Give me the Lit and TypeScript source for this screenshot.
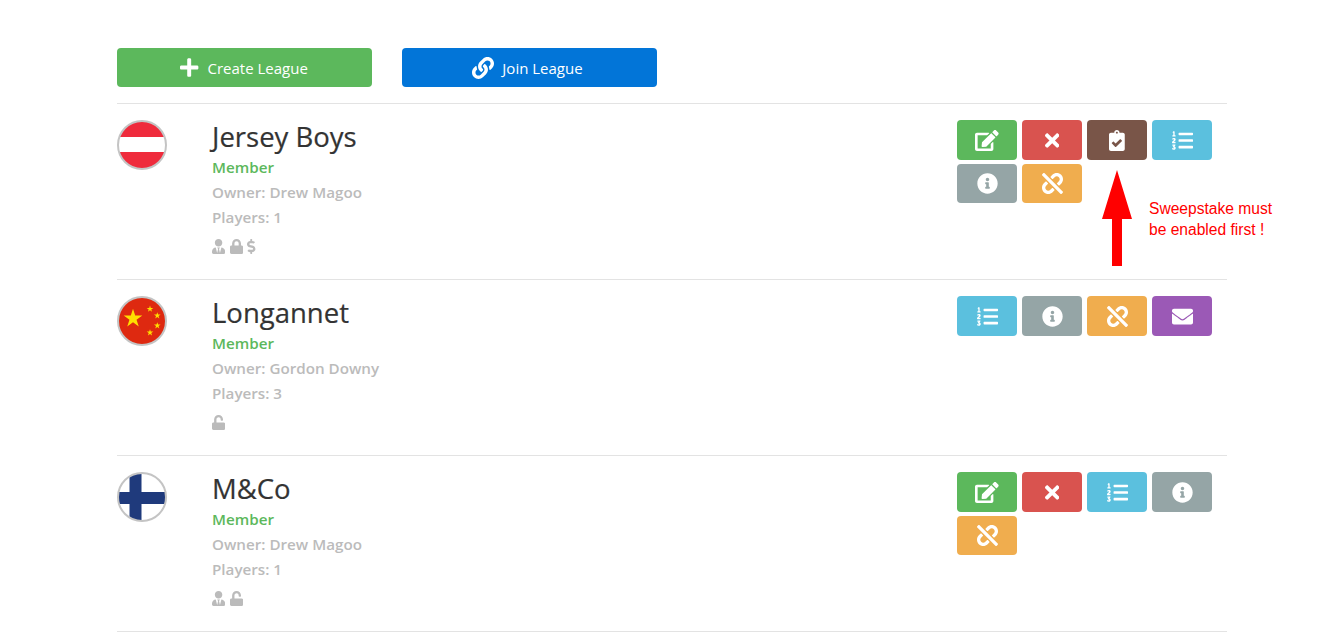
import { LitElement, html, css, svg } from "lit";
import { customElement } from "lit/decorators.js";

const I: Record<string, [number, string]> = {
  plus: [448, "M416 208H272V64c0-17.67-14.33-32-32-32h-32c-17.67 0-32 14.33-32 32v144H32c-17.67 0-32 14.33-32 32v32c0 17.67 14.33 32 32 32h144v144c0 17.67 14.33 32 32 32h32c17.67 0 32-14.33 32-32V304h144c17.67 0 32-14.33 32-32v-32c0-17.67-14.33-32-32-32z"],
  link: [512, "M326.612 185.391c59.747 59.809 58.927 155.698.36 214.59-.11.12-.24.25-.36.37l-67.2 67.2c-59.27 59.27-155.699 59.262-214.96 0-59.27-59.26-59.27-155.7 0-214.96l37.106-37.106c9.84-9.84 26.786-3.3 27.294 10.606.648 17.722 3.826 35.527 9.69 52.721 1.986 5.822.567 12.262-3.783 16.612l-13.087 13.087c-28.026 28.026-28.905 73.66-1.155 101.96 28.024 28.579 74.086 28.749 102.325.51l67.2-67.19c28.191-28.191 28.073-73.757 0-101.83-3.701-3.694-7.429-6.564-10.341-8.569a16.037 16.037 0 0 1-6.947-12.606c-.396-10.567 3.348-21.456 11.698-29.806l21.054-21.055c5.521-5.521 14.182-6.199 20.584-1.731a152.482 152.482 0 0 1 20.522 17.197zM467.547 44.449c-59.261-59.262-155.69-59.27-214.96 0l-67.2 67.2c-.12.12-.25.25-.36.37-58.566 58.892-59.387 154.781.36 214.59a152.454 152.454 0 0 0 20.521 17.196c6.402 4.468 15.064 3.789 20.584-1.731l21.054-21.055c8.35-8.35 12.094-19.239 11.698-29.806a16.037 16.037 0 0 0-6.947-12.606c-2.912-2.005-6.64-4.875-10.341-8.569-28.073-28.073-28.191-73.639 0-101.83l67.2-67.19c28.239-28.239 74.3-28.069 102.325.51 27.75 28.3 26.872 73.934-1.155 101.96l-13.087 13.087c-4.35 4.35-5.769 10.79-3.783 16.612 5.864 17.194 9.042 34.999 9.69 52.721.509 13.906 17.454 20.446 27.294 10.606l37.106-37.106c59.271-59.259 59.271-155.699.001-214.959z"],
  times: [352, "M242.72 256l100.07-100.07c12.28-12.28 12.28-32.19 0-44.48l-22.24-22.24c-12.28-12.28-32.19-12.28-44.48 0L176 189.28 75.93 89.21c-12.28-12.28-32.19-12.28-44.48 0L9.21 111.45c-12.28 12.28-12.28 32.19 0 44.48L109.28 256 9.21 356.07c-12.28 12.28-12.28 32.19 0 44.48l22.24 22.24c12.28 12.28 32.2 12.28 44.48 0L176 322.72l100.07 100.07c12.28 12.28 32.2 12.28 44.48 0l22.24-22.24c12.28-12.28 12.28-32.19 0-44.48L242.72 256z"],
  info: [512, "M256 8C119.043 8 8 119.083 8 256c0 136.997 111.043 248 248 248s248-111.003 248-248C504 119.083 392.957 8 256 8zm0 110c23.196 0 42 18.804 42 42s-18.804 42-42 42-42-18.804-42-42 18.804-42 42-42zm56 254c0 6.627-5.373 12-12 12h-88c-6.627 0-12-5.373-12-12v-24c0-6.627 5.373-12 12-12h12v-64h-12c-6.627 0-12-5.373-12-12v-24c0-6.627 5.373-12 12-12h64c6.627 0 12 5.373 12 12v100h12c6.627 0 12 5.373 12 12v24z"],
  envelope: [512, "M502.3 190.8c3.9-3.1 9.7-.2 9.7 4.7V400c0 26.5-21.5 48-48 48H48c-26.5 0-48-21.5-48-48V195.6c0-5 5.7-7.8 9.7-4.7 22.4 17.4 52.1 39.5 154.1 113.6 21.1 15.4 56.7 47.8 92.2 47.6 35.7.3 72-32.8 92.3-47.6 102-74.1 131.6-96.3 154-113.7zM256 320c23.2.4 56.6-29.2 73.4-41.4 132.7-96.3 142.8-104.7 173.4-128.7 5.8-4.5 9.2-11.5 9.2-18.9v-19c0-26.5-21.5-48-48-48H48C21.5 64 0 85.5 0 112v19c0 7.4 3.4 14.3 9.2 18.9 30.6 23.9 40.7 32.4 173.4 128.7 16.8 12.2 50.2 41.8 73.4 41.4z"],
  check: [384, "M336 64h-80c0-35.3-28.7-64-64-64s-64 28.7-64 64H48C21.5 64 0 85.5 0 112v352c0 26.5 21.5 48 48 48h288c26.5 0 48-21.5 48-48V112c0-26.5-21.5-48-48-48zM192 40c13.3 0 24 10.7 24 24s-10.7 24-24 24-24-10.7-24-24 10.7-24 24-24zm121.2 231.8l-143 141.8c-4.7 4.7-12.3 4.6-17-.1l-82.6-83.3c-4.7-4.7-4.6-12.3.1-17L99.1 285c4.7-4.7 12.3-4.6 17 .1l46 46.4 106-105.2c4.7-4.7 12.3-4.6 17 .1l28.2 28.4c4.7 4.8 4.6 12.3-.1 17z"],
  list: [512, "M61.77 401l17.5-20.15a19.92 19.92 0 0 0 5.07-14.19v-3.31C84.34 356 80.5 352 73 352H16a8 8 0 0 0-8 8v16a8 8 0 0 0 8 8h22.83a157.41 157.41 0 0 0-11 12.31l-5.61 7c-4 5.07-5.25 10.13-2.8 14.88l1.05 1.93c3 5.76 6.29 7.88 12.25 7.88h4.73c10.33 0 15.94 2.44 15.94 9.09 0 4.72-4.2 8.22-14.36 8.22a41.54 41.54 0 0 1-15.47-3.12c-6.49-3.88-11.74-3.5-15.6 3.12l-5.59 9.31c-3.72 6.13-3.19 11.72 2.63 15.94 7.71 4.69 20.38 9.44 37 9.44 34.16 0 48.5-22.75 48.5-44.12-.03-14.38-9.12-29.76-28.73-34.88zM496 224H176a16 16 0 0 0-16 16v32a16 16 0 0 0 16 16h320a16 16 0 0 0 16-16v-32a16 16 0 0 0-16-16zm0-160H176a16 16 0 0 0-16 16v32a16 16 0 0 0 16 16h320a16 16 0 0 0 16-16V80a16 16 0 0 0-16-16zm0 320H176a16 16 0 0 0-16 16v32a16 16 0 0 0 16 16h320a16 16 0 0 0 16-16v-32a16 16 0 0 0-16-16zM16 160h64a8 8 0 0 0 8-8v-16a8 8 0 0 0-8-8H64V40a8 8 0 0 0-8-8H32a8 8 0 0 0-7.14 4.42l-8 16A8 8 0 0 0 24 64h8v64H16a8 8 0 0 0-8 8v16a8 8 0 0 0 8 8zm-3.91 160H80a8 8 0 0 0 8-8v-16a8 8 0 0 0-8-8H41.32c3.29-10.29 48.34-18.68 48.34-56.44 0-29.06-25-39.56-44.47-39.56-21.36 0-33.8 10-40.46 18.75-4.37 5.59-3 10.84 2.8 15.37l8.58 6.88c5.61 4.56 11 2.47 16.12-2.44a13.44 13.44 0 0 1 9.46-3.84c3.33 0 9.28 1.56 9.28 8.75C51 248.19 0 257.31 0 304.59v4C0 316 5.08 320 12.09 320z"],
  lock: [448, "M400 224h-24v-72C376 68.2 307.8 0 224 0S72 68.2 72 152v72H48c-26.5 0-48 21.5-48 48v192c0 26.5 21.5 48 48 48h352c26.5 0 48-21.5 48-48V272c0-26.5-21.5-48-48-48zm-104 0H152v-72c0-39.7 32.3-72 72-72s72 32.3 72 72v72z"],
  unlock: [448, "M400 256H152V152.9c0-39.6 31.7-72.5 71.3-72.9 40-.4 72.7 32.1 72.7 72v16c0 13.3 10.7 24 24 24h32c13.3 0 24-10.7 24-24v-16C376 68 307.5-.3 223.5 0 139.5.3 72 69.5 72 153.5V256H48c-26.5 0-48 21.5-48 48v160c0 26.5 21.5 48 48 48h352c26.5 0 48-21.5 48-48V304c0-26.5-21.5-48-48-48z"],
  edit: [576, "M402.6 83.2l90.2 90.2c3.8 3.8 3.8 10 0 13.8L274.4 405.6l-92.8 10.3c-12.4 1.4-22.9-9.1-21.5-21.5l10.3-92.8L388.8 83.2c3.8-3.8 10-3.8 13.8 0zm162-22.9l-48.8-48.8c-15.2-15.2-39.9-15.2-55.2 0l-35.4 35.4c-3.8 3.8-3.8 10 0 13.8l90.2 90.2c3.8 3.8 10 3.8 13.8 0l35.4-35.4c15.2-15.3 15.2-40 0-55.2zM384 346.2V448H64V128h229.8c3.2 0 6.2-1.3 8.5-3.5l40-40c7.6-7.6 2.2-20.5-8.5-20.5H48C21.5 64 0 85.5 0 112v352c0 26.5 21.5 48 48 48h352c26.5 0 48-21.5 48-48V306.2c0-10.7-12.9-16-20.5-8.5l-40 40c-2.2 2.3-3.5 5.3-3.5 8.5z"],
  unlink: [512, "M304.083 405.907c4.686 4.686 4.686 12.284 0 16.97l-44.674 44.674c-59.263 59.262-155.693 59.266-214.961 0-59.264-59.265-59.264-155.696 0-214.96l44.675-44.675c4.686-4.686 12.284-4.686 16.971 0l39.598 39.598c4.686 4.686 4.686 12.284 0 16.971l-44.675 44.674c-28.072 28.073-28.072 73.75 0 101.823 28.072 28.072 73.75 28.073 101.824 0l44.674-44.674c4.686-4.686 12.284-4.686 16.971 0l39.597 39.599zm-56.568-260.216c4.686 4.686 12.284 4.686 16.971 0l44.674-44.674c28.072-28.075 73.75-28.073 101.824 0 28.072 28.073 28.072 73.75 0 101.823l-44.675 44.674c-4.686 4.686-4.686 12.284 0 16.971l39.598 39.598c4.686 4.686 12.284 4.686 16.971 0l44.675-44.675c59.265-59.265 59.265-155.695 0-214.96-59.266-59.264-155.695-59.264-214.961 0l-44.674 44.674c-4.686 4.686-4.686 12.284 0 16.971l39.597 39.598zm234.828 359.28l22.627-22.627c9.373-9.373 9.373-24.569 0-33.941L63.598 7.029c-9.373-9.373-24.569-9.373-33.941 0L7.029 29.657c-9.373 9.373-9.373 24.569 0 33.941l441.373 441.373c9.373 9.372 24.569 9.372 33.941 0z"],
  user: [448, "M224 256c70.7 0 128-57.3 128-128S294.7 0 224 0 96 57.3 96 128s57.3 128 128 128zm95.8 32.6L272 480l-32-136 32-56h-96l32 56-32 136-47.8-191.4C56.9 292 0 350.3 0 422.4V464c0 26.5 21.5 48 48 48h352c26.5 0 48-21.5 48-48v-41.6c0-72.1-56.9-130.4-128.2-133.8z"],
  dollar: [288, "M209.2 233.4l-108-31.6C88.7 198.2 80 186.5 80 173.5c0-16.3 13.2-29.5 29.5-29.5h66.3c12.2 0 24.2 3.7 34.2 10.5 6.1 4.1 14.3 3.1 19.5-2l34.8-34c7.1-6.9 6.1-18.4-1.8-24.5C238 74.8 207.4 64.1 176 64V16c0-8.8-7.2-16-16-16h-32c-8.8 0-16 7.2-16 16v48h-2.5C45.8 64-5.4 118.7.5 183.6c4.2 46.1 39.4 83.6 83.8 96.6l102.5 30c12.5 3.7 21.2 15.3 21.2 28.3 0 16.3-13.2 29.5-29.5 29.5h-66.3C100 368 88 364.3 78 357.5c-6.1-4.1-14.3-3.1-19.5 2l-34.8 34c-7.1 6.9-6.1 18.4 1.8 24.5 24.5 19.2 55.1 29.9 86.5 30v48c0 8.8 7.2 16 16 16h32c8.8 0 16-7.2 16-16v-48.2c46.6-.9 90.3-28.6 105.7-72.7 21.5-61.6-14.6-124.8-72.5-141.7z"],
};

const icon = (n: string, size: number) => {
  const [w, d] = I[n];
  return html`<svg class="ic" width=${(w / 512) * size} height=${size} viewBox="0 0 ${w} 512" fill="currentColor"><path d=${d}></path></svg>`;
};

const star = (cx: number, cy: number, r: number) => {
  const pts: string[] = [];
  for (let i = 0; i < 10; i++) {
    const a = -Math.PI / 2 + (i * Math.PI) / 5;
    const q = i % 2 ? r * 0.382 : r;
    pts.push(`${(cx + q * Math.cos(a)).toFixed(2)},${(cy + q * Math.sin(a)).toFixed(2)}`);
  }
  return svg`<polygon points=${pts.join(" ")} fill="#ffde00"></polygon>`;
};

const flags: Record<string, unknown> = {
  at: svg`<rect width="50" height="50" fill="#ef2b3c"></rect><rect y="17" width="50" height="15" fill="#fff"></rect>`,
  cn: svg`<rect width="50" height="50" fill="#de2910"></rect>${star(16, 22.5, 9.8)}${star(33, 13, 3.5)}${star(40.3, 19.7, 3.5)}${star(40.3, 29.7, 3.5)}${star(33, 36.7, 3.5)}`,
  fi: svg`<rect width="50" height="50" fill="#fff"></rect><rect x="12.5" width="12" height="50" fill="#1f3a7c"></rect><rect y="20" width="50" height="12" fill="#1f3a7c"></rect>`,
};

type Btn = { i: string; c: string };
const B: Record<string, Btn> = {
  edit: { i: "edit", c: "green" },
  del: { i: "times", c: "red" },
  check: { i: "check", c: "brown" },
  list: { i: "list", c: "cyan" },
  info: { i: "info", c: "grey" },
  unlink: { i: "unlink", c: "orange" },
  mail: { i: "envelope", c: "purple" },
};

const leagues = [
  { flag: "at", name: "Jersey Boys", owner: "Drew Magoo", players: 1, meta: ["user", "lock", "dollar"], btns: ["edit", "del", "check", "list", "info", "unlink"], note: true },
  { flag: "cn", name: "Longannet", owner: "Gordon Downy", players: 3, meta: ["unlock"], btns: ["list", "info", "unlink", "mail"], note: false },
  { flag: "fi", name: "M&Co", owner: "Drew Magoo", players: 1, meta: ["user", "unlock"], btns: ["edit", "del", "list", "info", "unlink"], note: false },
];

@customElement("app-root")
export class AppRoot extends LitElement {
  static styles = css`
    :host {
      display: block;
      font-family: "Open Sans", "Noto Sans", sans-serif;
    }
    .page {
      width: 1110px;
      margin: 0 auto;
      padding-top: 48px;
    }
    .top {
      display: flex;
      gap: 30px;
      padding-bottom: 16px;
      border-bottom: 1px solid #e3e3e3;
    }
    .cta {
      box-sizing: border-box;
      width: 255px;
      height: 39px;
      border-radius: 4px;
      color: #fff;
      display: flex;
      align-items: center;
      justify-content: center;
      gap: 9px;
      font-size: 15px;
    }
    .cta.create { background: #5cb85c; }
    .cta.join { background: #0275d8; padding-right: 3px; gap: 8px; }
    .ic { display: block; flex: none; }
    .row {
      position: relative;
      display: flex;
      height: 159px;
      padding-top: 16px;
      border-bottom: 1px solid #e3e3e3;
    }
    .flag {
      width: 50px;
      height: 50px;
      flex: none;
      display: block;
      margin-right: 45.5px;
    }
    .info { flex: 1; }
    .name {
      font-size: 27.5px;
      line-height: 33px;
      color: #333;
      font-weight: 400;
      -webkit-text-stroke: 0.2px #333;
    }
    .line {
      font-size: 15.2px;
      line-height: 25px;
      font-weight: 600;
      color: #bbb;
    }
    .member {
      color: #5cb85c;
      margin-top: 2px;
    }
    .meta {
      display: flex;
      gap: 4.5px;
      color: #bbb;
      margin-top: 9px;
    }
    .acts {
      width: 255px;
      margin-right: 15px;
      display: grid;
      grid-template-columns: repeat(4, 60px);
      grid-template-rows: 40px 39px;
      gap: 4px 5px;
      align-content: start;
    }
    .act {
      box-sizing: border-box;
      padding-left: 1px;
      border-radius: 4px;
      color: #fff;
      display: flex;
      align-items: center;
      justify-content: center;
    }
    .green { background: #5cb85c; }
    .red { background: #d9534f; }
    .brown { background: #795548; }
    .cyan { background: #5bc0de; }
    .grey { background: #95a5a6; }
    .orange { background: #f0ad4e; }
    .purple { background: #9b59b6; }
    .note {
      position: absolute;
      left: 985px;
      top: 66px;
    }
    .arrow { display: block; }
    .note-text {
      position: absolute;
      left: 47.5px;
      top: 29px;
      font-family: "Liberation Sans", Arial, sans-serif;
      font-size: 15.6px;
      line-height: 20.5px;
      color: #f00;
      white-space: nowrap;
    }
  `;

  render() {
    return html`<div class="page">
      <div class="top">
        <div class="cta create">${icon("plus", 21)}<span>Create League</span></div>
        <div class="cta join">${icon("link", 22)}<span>Join League</span></div>
      </div>
      ${leagues.map(
        (l) => html`<div class="row">
          <svg class="flag" viewBox="0 0 50 50">
            <defs><clipPath id="c-${l.flag}"><circle cx="25" cy="25" r="24"></circle></clipPath></defs>
            <g clip-path="url(#c-${l.flag})">${flags[l.flag]}</g>
            <circle cx="25" cy="25" r="24" fill="none" stroke="#c4c4c4" stroke-width="2"></circle>
          </svg>
          <div class="info">
            <div class="name">${l.name}</div>
            <div class="line member">Member</div>
            <div class="line">Owner: ${l.owner}</div>
            <div class="line">Players: ${l.players}</div>
            <div class="meta">${l.meta.map((m) => icon(m, 15))}</div>
          </div>
          <div class="acts">
            ${l.btns.map((b) => html`<div class="act ${B[b].c}">${icon(B[b].i, 21)}</div>`)}
          </div>
          ${l.note
            ? html`<div class="note">
                <svg class="arrow" width="30" height="96" viewBox="0 0 30 96"><path d="M15 0 L30 49 H20 V96 H10 V49 H0 Z" fill="#f00"></path></svg>
                <div class="note-text">Sweepstake must<br />be enabled first !</div>
              </div>`
            : ""}
        </div>`
      )}
    </div>`;
  }
}
